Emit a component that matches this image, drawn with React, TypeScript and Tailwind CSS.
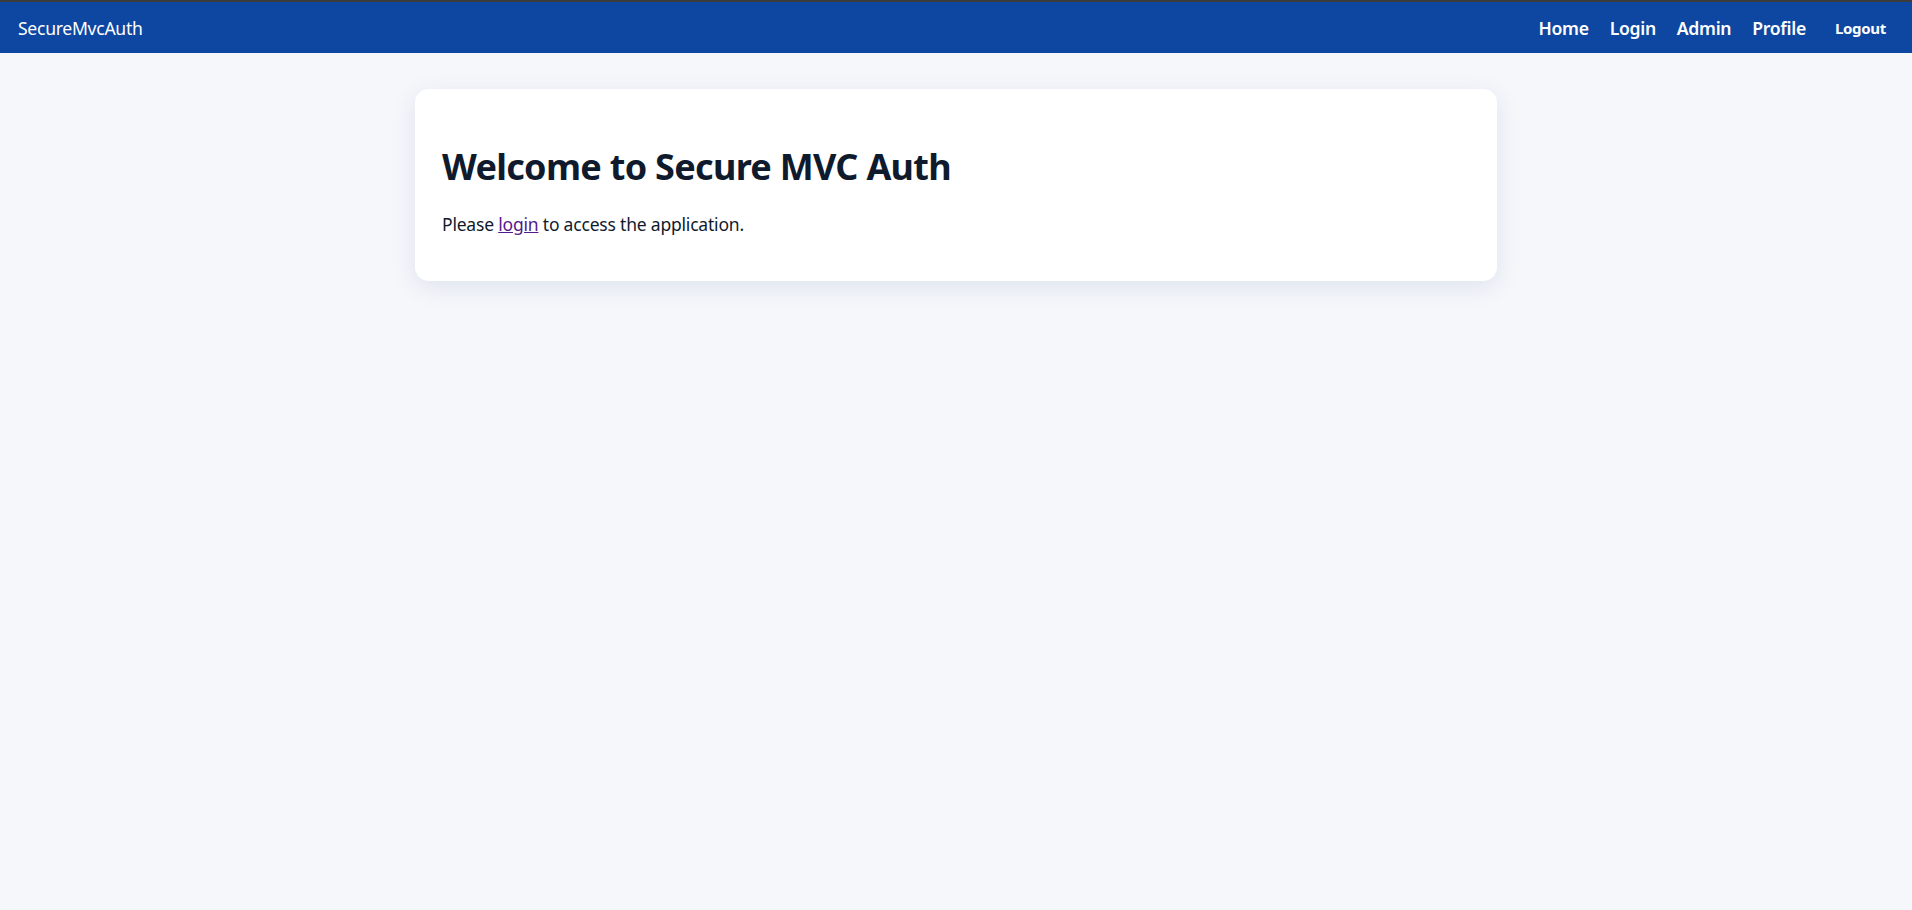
export default function App() {
  return (
    <div
      className="min-h-screen bg-[#f5f7fb] text-[#0f1b2d]"
      style={{ fontFamily: '"Noto Sans", "Open Sans", sans-serif' }}
    >
      <div className="h-[2px] bg-[#3c3c3c]" />
      <nav className="flex h-[51px] items-center justify-between bg-[#0d47a1] pl-[18px] pr-[26px] text-white">
        <a className="pt-[2px] text-[17.6px] tracking-[-0.3px]">SecureMvcAuth</a>
        <ul className="flex items-center gap-[21px] pt-[2px] font-semibold">
          <li className="text-[17.6px] tracking-[-0.3px]">Home</li>
          <li className="text-[17.6px] tracking-[-0.3px]">Login</li>
          <li className="text-[17.6px] tracking-[-0.3px]">Admin</li>
          <li className="text-[17.6px] tracking-[-0.3px]">Profile</li>
          <li className="ml-[8px]">
            <button className="text-[15px] font-bold tracking-[-0.3px]">Logout</button>
          </li>
        </ul>
      </nav>
      <main className="mx-auto w-[1082px] pt-[36px]">
        <div className="h-[192px] rounded-[14px] bg-white px-[27px] pt-[60px] shadow-[0_6px_24px_rgba(30,50,110,0.10)]">
          <h1 className="text-[36px] font-bold leading-none tracking-[-0.7px]">Welcome to Secure MVC Auth</h1>
          <p className="mt-[26px] text-[17.5px] tracking-[-0.2px]">
            Please{" "}
            <a href="#" className="text-[#551a8b] underline">
              login
            </a>{" "}
            to access the application.
          </p>
        </div>
      </main>
    </div>
  );
}
